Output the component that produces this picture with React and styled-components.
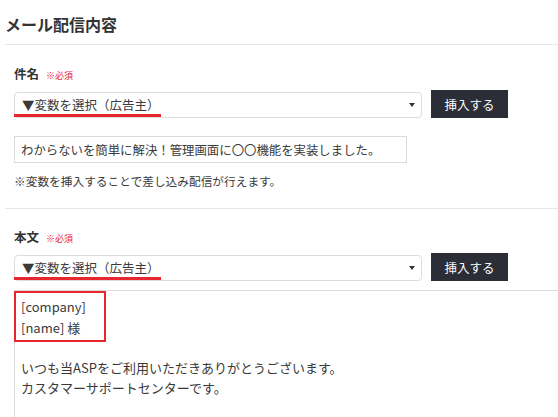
import React from 'react';
import styled, { createGlobalStyle } from 'styled-components';

const GlobalStyle = createGlobalStyle`
  html, body {
    margin: 0;
    padding: 0;
    background: #fff;
    overflow: hidden;
  }
  body {
    font-family: "Noto Sans CJK JP", "Noto Sans", sans-serif;
    color: #333;
  }
`;

const Page = styled.div`
  height: 417px;
  overflow: hidden;
  padding-left: 5px;
`;

const Title = styled.h2`
  margin: 0;
  padding: 14px 0 10px;
  font-size: 16px;
  line-height: 20px;
  font-weight: bold;
  color: #333;
  border-bottom: 1px solid #e6e6e6;
`;

const Section = styled.section`
  padding: ${(p) => (p.$first ? '20px' : '19px')} 0 ${(p) => (p.$first ? '18px' : '0')} 9px;
  border-bottom: ${(p) => (p.$first ? '1px solid #e6e6e6' : 'none')};
`;

const Label = styled.div`
  display: flex;
  align-items: baseline;
  gap: 7px;
  height: 18px;
  line-height: 18px;
  font-size: 12.5px;
  font-weight: bold;
  color: #333;
  margin-bottom: 7px;
`;

const Required = styled.span`
  font-size: 9px;
  font-weight: normal;
  color: #e8262d;
`;

const Row = styled.div`
  display: flex;
  align-items: center;
  gap: 9px;
  height: 28px;
`;

const SelectWrap = styled.div`
  position: relative;
  width: 408px;
  height: 26px;
`;

const Select = styled.select`
  appearance: none;
  width: 100%;
  height: 100%;
  box-sizing: border-box;
  border: 1px solid #dcdcdc;
  border-radius: 4px;
  background: #fff;
  padding: 0 20px 0 7px;
  font-family: inherit;
  font-size: 12.5px;
  color: #3a3a3a;
  outline: none;
`;

const Caret = styled.span`
  position: absolute;
  right: 7px;
  top: 12px;
  width: 0;
  height: 0;
  border-left: 3.5px solid transparent;
  border-right: 3.5px solid transparent;
  border-top: 4px solid #333;
  pointer-events: none;
`;

const Underline = styled.span`
  position: absolute;
  left: 0;
  top: 22.5px;
  width: 147px;
  height: 3px;
  background: #e8262d;
  pointer-events: none;
`;

const InsertButton = styled.button`
  width: 77px;
  height: 28px;
  border: none;
  background: #2b2e36;
  color: #fff;
  font-family: inherit;
  font-size: 12.5px;
  padding: 0;
  cursor: pointer;
`;

const TextInput = styled.input`
  display: block;
  margin-top: 18px;
  width: 393px;
  height: 27px;
  box-sizing: border-box;
  border: 1px solid #dcdcdc;
  padding: 0 6px;
  font-family: inherit;
  font-size: 12.4px;
  color: #3a3a3a;
  outline: none;
`;

const Note = styled.p`
  margin: 9px 0 0;
  font-size: 11.7px;
  line-height: 18px;
  color: #3a3a3a;
`;

const Body = styled.div`
  margin-top: 9px;
  width: 600px;
  height: 200px;
  box-sizing: border-box;
  border-top: 1px solid #dcdcdc;
  border-left: 1px solid #dcdcdc;
  font-size: 13px;
  line-height: 21px;
  color: #3a3a3a;
`;

const Highlight = styled.div`
  width: 92px;
  box-sizing: border-box;
  margin-left: -1px;
  border: 2px solid #e8262d;
  padding: 3px 5px 2px;
`;

const Paragraph = styled.p`
  margin: 16px 0 0;
  padding-left: 6px;
  line-height: 20px;
`;

function VariableRow() {
  return (
    <Row>
      <SelectWrap>
        <Select defaultValue="ad">
          <option value="ad">▼変数を選択（広告主）</option>
        </Select>
        <Caret />
        <Underline />
      </SelectWrap>
      <InsertButton>挿入する</InsertButton>
    </Row>
  );
}

export default function App() {
  return (
    <>
      <GlobalStyle />
      <Page>
        <Title>メール配信内容</Title>
        <Section $first>
          <Label>
            件名<Required>※必須</Required>
          </Label>
          <VariableRow />
          <TextInput defaultValue="わからないを簡単に解決！管理画面に〇〇機能を実装しました。" />
          <Note>※変数を挿入することで差し込み配信が行えます。</Note>
        </Section>
        <Section>
          <Label>
            本文<Required>※必須</Required>
          </Label>
          <VariableRow />
          <Body>
            <Highlight>
              [company]
              <br />
              [name] 様
            </Highlight>
            <Paragraph>
              いつも当ASPをご利用いただきありがとうございます。
              <br />
              カスタマーサポートセンターです。
            </Paragraph>
          </Body>
        </Section>
      </Page>
    </>
  );
}
